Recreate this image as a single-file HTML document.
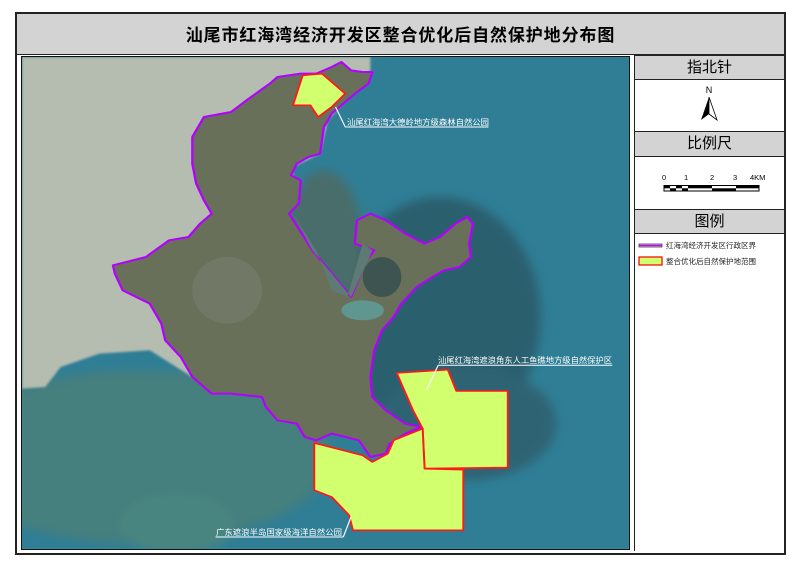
<!DOCTYPE html>
<html><head><meta charset="utf-8"><style>
html,body{margin:0;padding:0;background:#fff;}
body{width:800px;height:566px;position:relative;overflow:hidden;font-family:"Liberation Sans","Noto Sans CJK SC",sans-serif;}
.abs{position:absolute;}
.hdr{position:absolute;left:635px;width:149px;background:#d3d3d3;border-top:1px solid #222;border-bottom:1px solid #222;text-align:center;font-size:15px;color:#000;}
</style></head><body>
<div class="abs" style="left:15px;top:12px;width:767px;height:539px;border:2px solid #222;"></div>
<div class="abs" style="left:17px;top:14px;width:767px;height:40px;background:#d3d3d3;border-bottom:1px solid #222;"></div>
<div class="abs" style="left:17px;top:21px;width:767px;text-align:center;font-size:17px;font-weight:bold;letter-spacing:0.9px;">汕尾市红海湾经济开发区整合优化后自然保护地分布图</div>
<div class="abs" style="left:634px;top:55px;width:0;height:496px;border-left:1px solid #222;"></div>
<div class="hdr" style="top:55px;height:23px;line-height:23px;">指北针</div>
<div class="hdr" style="top:131px;height:24px;line-height:24px;">比例尺</div>
<div class="hdr" style="top:209px;height:23px;line-height:23px;">图例</div>
<svg class="abs" style="left:634px;top:80px" width="150" height="200">
 <text x="75" y="13" font-size="9" text-anchor="middle" font-family="Liberation Sans" fill="#000">N</text>
 <polygon points="75,17 67,40 75,34" fill="#000"/>
 <polygon points="75,17 83,40 75,34" fill="#fff" stroke="#000" stroke-width="0.8"/>
 <g font-size="7.5" font-family="Liberation Sans" fill="#000">
 <text x="28" y="100">0</text><text x="50" y="100">1</text><text x="76" y="100">2</text><text x="99" y="100">3</text><text x="116" y="100">4KM</text></g>
 <rect x="30" y="105.5" width="95" height="5.5" fill="#fff" stroke="#000" stroke-width="1"/>
 <rect x="30" y="105.5" width="6" height="2.8" fill="#000"/><rect x="36" y="108.3" width="6" height="2.8" fill="#000"/>
 <rect x="42" y="105.5" width="6" height="2.8" fill="#000"/><rect x="48" y="108.3" width="6" height="2.8" fill="#000"/>
 <rect x="54" y="105.5" width="24" height="2.8" fill="#000"/><rect x="78" y="108.3" width="24" height="2.8" fill="#000"/>
 <rect x="102" y="105.5" width="23" height="2.8" fill="#000"/>
 <rect x="5" y="164" width="23" height="3" fill="#fff" stroke="#000" stroke-width="0.6"/>
 <line x1="5" y1="165.5" x2="28" y2="165.5" stroke="#cc00ff" stroke-width="1.6"/>
 <rect x="5" y="177" width="23" height="8" fill="#d2ff6e" stroke="#e00" stroke-width="1.2"/>
 <text x="32" y="168" font-size="7.5" fill="#222">红海湾经济开发区行政区界</text>
 <text x="32" y="184" font-size="7.5" fill="#222">整合优化后自然保护地范围</text>
</svg>
<div class="abs" style="left:21px;top:56px;width:607px;height:492px;border:1px solid #111;overflow:hidden;">
<svg width="607" height="492" style="display:block">
<defs><filter id="b" x="-20%" y="-20%" width="140%" height="140%"><feGaussianBlur stdDeviation="14"/></filter>
<filter id="b2"><feGaussianBlur stdDeviation="3"/></filter></defs>
<g transform="scale(0.3871,0.3333)">
<rect width="1568" height="1476" fill="#2f7e96"/>
<g filter="url(#b)">
<ellipse cx="300" cy="1200" rx="500" ry="260" fill="#447f7e"/>
<ellipse cx="1080" cy="780" rx="260" ry="360" fill="#2a5e6e"/>
<ellipse cx="1150" cy="1100" rx="230" ry="170" fill="#2d6473"/>
<ellipse cx="400" cy="1400" rx="150" ry="90" fill="#4a8580"/>
<ellipse cx="780" cy="560" rx="100" ry="220" fill="#4a6d6a"/>
</g>
<polygon filter="url(#b2)" fill="#b5bcb0" points="0,0 900,0 900,40 860,100 790,190 770,290 700,330 700,420 650,460 480,480 480,990 330,880 200,890 100,930 60,990 0,995"/>
<polygon fill="#69705a" stroke="#b400ff" stroke-width="6" stroke-linejoin="round" points="660,60 720,50 760,50 800,30 825,15 850,40 880,45 905,45 895,80 860,110 830,140 800,170 780,210 770,290 740,300 710,320 695,355 720,370 715,440 690,470 750,580 850,720 890,610 910,580 860,560 865,490 900,470 940,490 990,530 1040,560 1080,540 1120,500 1150,480 1165,500 1155,560 1160,600 1130,630 1090,640 1060,660 1020,690 980,740 960,780 930,820 910,880 900,960 905,1020 940,1060 990,1100 1030,1110 990,1130 950,1160 940,1190 900,1200 870,1150 800,1130 760,1150 730,1140 710,1100 660,1090 630,1050 620,1020 540,1010 490,1010 440,960 410,900 370,850 360,800 330,740 260,700 240,650 235,625 320,600 380,550 430,540 460,500 490,470 470,430 450,380 440,320 440,240 470,180 540,165 580,130 640,80"/>
<polygon fill="#5d7a74" points="700,470 750,580 850,720 890,620 905,580 880,560 840,720 800,700 760,580"/>
<ellipse cx="930" cy="660" rx="50" ry="60" fill="#3e5450"/>
<ellipse cx="880" cy="760" rx="55" ry="30" fill="#5f9690"/>
<ellipse cx="530" cy="700" rx="90" ry="100" fill="#7a8070" opacity="0.5"/>
<g fill="#d2ff6e" stroke="#ff1a1a" stroke-width="5" stroke-linejoin="round">
<polygon points="725,55 775,50 835,110 800,150 765,180 745,145 700,145"/>
<polygon points="968,948 1100,938 1122,1002 1255,1002 1255,1232 1040,1235 1035,1115 1010,1060"/>
<polygon points="755,1158 880,1195 905,1215 945,1190 960,1150 1035,1115 1040,1235 1140,1238 1140,1420 855,1420 845,1375 800,1320 755,1300"/>
</g>
<g stroke="#fff" stroke-width="3" fill="none">
<line x1="810" y1="150" x2="835" y2="210"/><line x1="835" y1="210" x2="1205" y2="210"/>
<line x1="1075" y1="925" x2="1045" y2="1000"/><line x1="1075" y1="925" x2="1525" y2="925"/>
<line x1="850" y1="1380" x2="830" y2="1440"/><line x1="500" y1="1440" x2="830" y2="1440"/>
</g>
</g>
<g fill="#fff" font-size="8" font-family="Liberation Sans,Noto Sans CJK SC,sans-serif">
<text x="325" y="68" textLength="142" lengthAdjust="spacingAndGlyphs">汕尾红海湾大德岭地方级森林自然公园</text>
<text x="416" y="306" textLength="174" lengthAdjust="spacingAndGlyphs">汕尾红海湾遮浪角东人工鱼礁地方级自然保护区</text>
<text x="194" y="478" textLength="126" lengthAdjust="spacingAndGlyphs">广东遮浪半岛国家级海洋自然公园</text>
</g>
</svg></div>
</body></html>
